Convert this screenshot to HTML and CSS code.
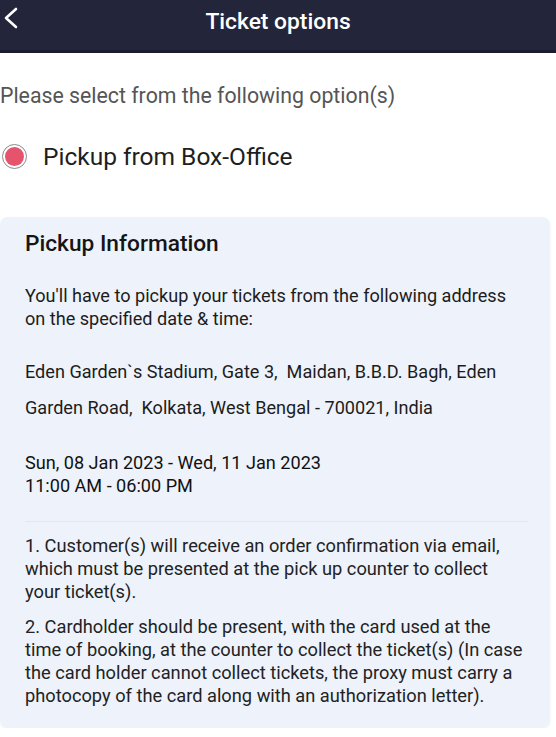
FILE: index.html
```html
<!DOCTYPE html>
<html lang="en">
  <head>
    <meta charset="UTF-8" />
    <meta name="viewport" content="width=device-width, initial-scale=1.0" />
    <title>Ticket options</title>
    <link rel="stylesheet" href="styles.css">
  </head>
  <body>
    <header class="topbar">
      <button class="back" aria-label="Back">
        <svg width="16" height="24" viewBox="0 0 16 24"><path d="M13 3 L3 12 L13 21" fill="none" stroke="#fff" stroke-width="2.6" stroke-linecap="round" stroke-linejoin="round"/></svg>
      </button>
      <h1>Ticket options</h1>
    </header>

    <p class="prompt">Please select from the following option(s)</p>

    <label class="option">
      <span class="radio"><span class="dot"></span></span>
      Pickup from Box-Office
    </label>

    <section class="card">
      <h2>Pickup Information</h2>
      <p class="intro">You'll have to pickup your tickets from the following address on the specified date &amp; time:</p>
      <p class="address">Eden Garden`s Stadium, Gate 3,&nbsp; Maidan, B.B.D. Bagh, Eden Garden Road,&nbsp; Kolkata, West Bengal - 700021, India</p>
      <p class="when">Sun, 08 Jan 2023 - Wed, 11 Jan 2023<br>11:00 AM - 06:00 PM</p>
      <hr>
      <p class="note">1. Customer(s) will receive an order confirmation via email, which must be presented at the pick up counter to collect your ticket(s).</p>
      <p class="note">2. Cardholder should be present, with the card used at the time of booking, at the counter to collect the ticket(s) (In case the card holder cannot collect tickets, the proxy must carry a photocopy of the card along with an authorization letter).</p>
    </section>
  </body>
</html>
```

FILE: styles.css
```css
* { box-sizing: border-box; }
body {
  font-family: Roboto, 'Noto Sans', sans-serif;
  background: #fff;
  margin: 0;
  color: #1c1c1c;
}
.topbar {
  height: 53px;
  background: #23253b;
  border-bottom: 3px solid #1b1d2e;
  display: flex;
  align-items: center;
  justify-content: center;
  position: relative;
}
.back {
  position: absolute;
  left: 0;
  top: 6px;
  background: none;
  border: none;
  padding: 0 0 0 3px;
  display: flex;
}
.topbar h1 {
  margin: 0 0 8px;
  color: #fff;
  font-size: 22.8px;
  font-weight: 500;
}
.prompt {
  margin: 30px 0 0;
  font-size: 21.3px;
  line-height: 25px;
  color: #555;
}
.option {
  display: flex;
  align-items: center;
  gap: 16px;
  margin-top: 34px;
  height: 29px;
  font-size: 24.5px;
  color: #1e1e1e;
}
.radio {
  width: 25px;
  height: 25px;
  border-radius: 50%;
  border: 1.5px solid #8a8a8a;
  margin-left: 2px;
  display: flex;
  align-items: center;
  justify-content: center;
  background: #fff;
}
.dot {
  width: 19px;
  height: 19px;
  border-radius: 50%;
  background: #e5546c;
}
.card {
  margin: 46px 6px 0 0;
  background: #edf2fb;
  border-radius: 8px;
  padding: 14px 22.5px 21px 25px;
  box-shadow: 0 1px 3px rgba(0,0,0,0.06);
}
.card h2 {
  margin: 0;
  font-size: 22.7px;
  line-height: 26px;
  font-weight: 500;
  color: #151515;
}
.card p {
  font-size: 18.1px;
  line-height: 23px;
  margin: 0;
}
.intro { margin-top: 27px !important; }
.address {
  margin-top: 24px !important;
  line-height: 36px !important;
}
.when {
  margin-top: 25px !important;
  color: #111;
}
.card hr {
  border: none;
  border-top: 1px solid #e2e7f0;
  margin: 24px 0 12px;
}
.card .note {
  color: #222;
  font-size: 18.25px;
}
.card .note + .note { margin-top: 12px; }
```
